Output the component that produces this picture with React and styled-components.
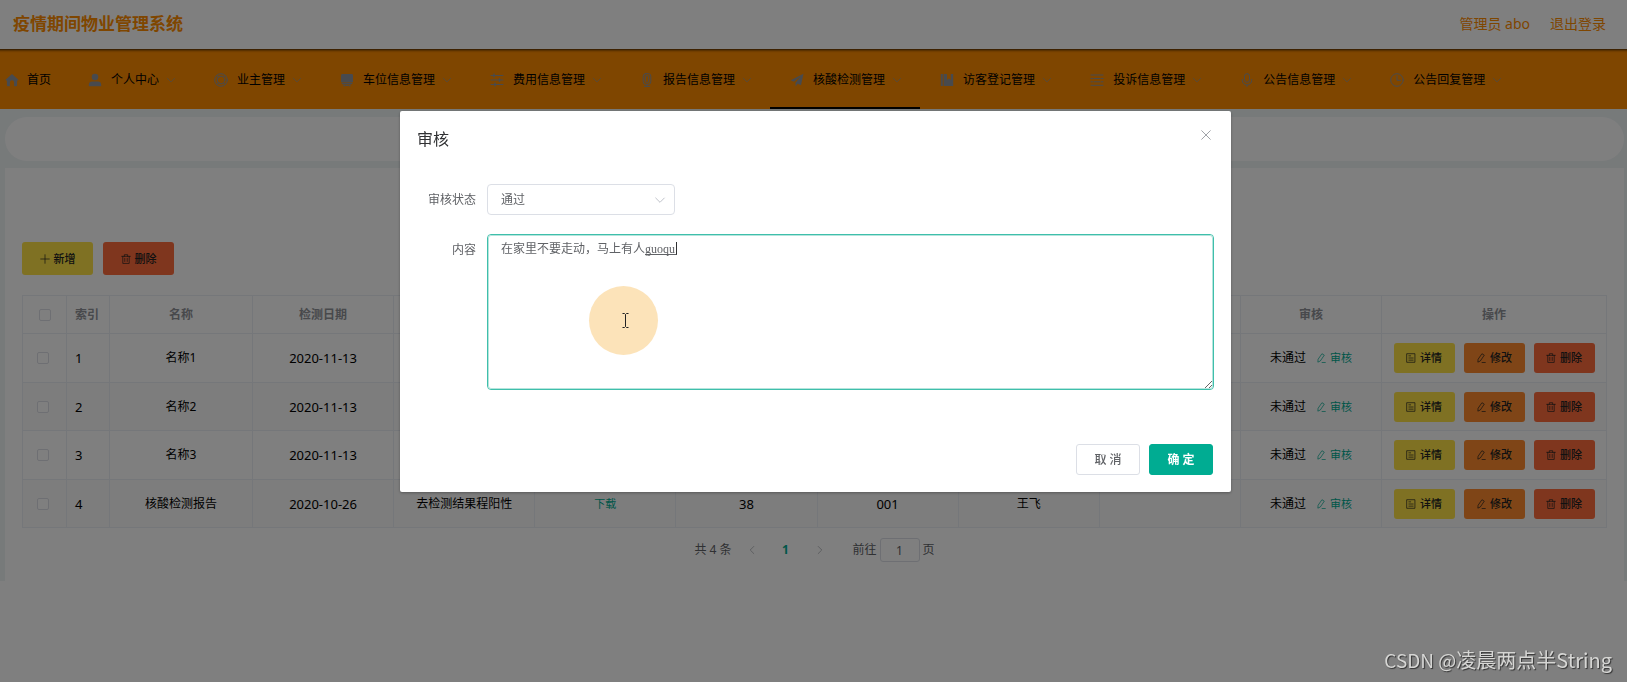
import React, { useState } from 'react';
import styled, { createGlobalStyle, css } from 'styled-components';

const GlobalStyle = createGlobalStyle`
  *, *::before, *::after { box-sizing: border-box; }
  body {
    margin: 0;
    background: #fff;
    color: #000;
    font: 12px/20px "Noto Sans", "Noto Sans CJK SC", sans-serif;
  }
  button, input, select, textarea { font: inherit; color: inherit; margin: 0; }
`;

/* ---------- icons ---------- */

const Svg = styled.svg`
  display: block;
  flex: none;
  width: ${(p) => p.$size || 14}px;
  height: ${(p) => p.$size || 14}px;
  fill: none;
  stroke: currentColor;
  stroke-width: ${(p) => p.$weight || 1};
  stroke-linecap: round;
  stroke-linejoin: round;
`;

const shapes = {
  home: <path fill="currentColor" stroke="none" d="M7 1 .8 6.6c-.3.3-.2.8.3.8h.8v5c0 .5.3.8.8.8h2.2V9.4a2.1 2.1 0 0 1 4.2 0v3.8h2.2c.5 0 .8-.3.8-.8v-5h.8c.5 0 .6-.5.3-.8z" />,
  user: (
    <g fill="currentColor" stroke="none">
      <circle cx="7" cy="4" r="3.3" />
      <path d="M.8 13.2v-1.4C.8 9.7 2.2 8.500 4 8.500h6c1.800 0 3.200 1.200 3.200 3.300v1.400z" />
    </g>
  ),
  help: (
    <g>
      <circle cx="7" cy="7" r="6.300" />
      <circle cx="7" cy="7" r="3.800" />
      <path d="M3 2.500 4.500 4.200M11 2.500 9.500 4.200M3 11.500l1.500-1.700M11 11.500 9.500 9.800" />
    </g>
  ),
  train: (
    <g fill="currentColor" stroke="none">
      <path d="M2.500 1h9c1 0 1.500.6 1.500 1.500V9H1V2.500C1 1.600 1.500 1 2.500 1z" />
      <path d="M1.300 9.600h11.400c-.2 1.200-1 1.900-2 1.900H3.300c-1 0-1.800-.7-2-1.900z" />
      <path d="M3.500 12h2v1.200h-2zM8.500 12h2v1.200h-2zM6 12h2v1H6z" />
    </g>
  ),
  sliders: (
    <g>
      <path d="M1 2.500h12M1 7h12M1 11.500h12" />
      <path d="M4 1.300v2.400M9.500 5.800v2.400M5 10.300v2.400" strokeWidth="1.600" />
    </g>
  ),
  phone: (
    <g>
      <rect x="3.200" y=".7" width="7.600" height="10.600" rx="2.500" />
      <rect x="5.300" y="2.700" width="3.400" height="6.600" rx="1" />
      <path d="M7 11.300v2M4.500 13.400h5" />
    </g>
  ),
  send: <path fill="currentColor" stroke="none" d="M13.500.8.6 7.200l3.300 1.600 7-5.600-5.400 6.500v3.700l2.200-2.700 3.300 1.600z" />,
  book: (
    <g fill="currentColor" stroke="none">
      <path d="M.8 1h2v12h-2z" />
      <path d="M3.600 1H7v6l1.900-1.500L10.800 7V1h2.400v12H3.600z" />
    </g>
  ),
  list: (
    <g>
      <path d="M1 2h12M1 12.300h12M1 5.500h1.500M11.500 5.500H13M1 8.800h1.500M11.500 8.800H13" />
      <path d="M4 5.500h6M4 8.800h6" />
    </g>
  ),
  mic: (
    <g>
      <rect x="4.500" y=".7" width="5" height="8.600" rx="2.500" />
      <path d="M2.300 6.500v.8a4.700 4.700 0 0 0 9.400 0v-.8M7 12v1.500" />
    </g>
  ),
  clock: (
    <g>
      <circle cx="7" cy="7" r="6.300" />
      <path d="M7 3v4.300h3.500" />
    </g>
  ),
  down: <path d="m2 4.700 5 5 5-5" />,
  left: <path d="m9.500 2-5 5 5 5" />,
  right: <path d="m4.500 2 5 5-5 5" />,
  close: <path d="m2 2 10 10M12 2 2 12" />,
  plus: <path d="M7 1v12M1 7h12" />,
  trash: <path d="M1 3.300h12M4.700 3.300V1h4.600v2.300M2.500 3.300v9.900h9v-9.900M5.300 6v4.500M8.700 6v4.500" />,
  doc: <path d="M1.500 1h11v12h-11zM4 4h2.500M4 7h6M4 10h6" />,
  edit: <path d="M8.800 1.300 11.600 3 6 11.200l-3.400 1.600.3-3.500zM8.500 13.300H13" />,
};

const Icon = ({ name, size, weight }) => (
  <Svg viewBox="0 0 14 14" $size={size} $weight={weight} aria-hidden="true">
    {shapes[name]}
  </Svg>
);

/* ---------- header ---------- */

const Header = styled.header`
  display: flex;
  align-items: center;
  justify-content: space-between;
  height: 49px;
  padding: 0 21px 2px 13px;
  color: #ff8c00;
`;

const SystemTitle = styled.h1`
  margin: 0;
  font-size: 17px;
  line-height: 24px;
  font-weight: 700;
`;

const Account = styled.div`
  display: flex;
  gap: 20px;
  font-size: 14px;
`;

const LogoutLink = styled.a`
  color: inherit;
  text-decoration: none;
`;

const Nav = styled.nav`
  display: flex;
  height: 60px;
  background: #ff8c00;
  box-shadow: inset 0 4px 3px -3px rgba(0, 0, 0, 0.8);
`;

const NavItem = styled.a`
  display: flex;
  flex: none;
  align-items: center;
  padding: 4px ${(p) => (p.$home ? 17 : 18)}px 0 ${(p) => (p.$home ? 2 : 17)}px;
  border-bottom: 2px solid ${(p) => (p.$active ? '#000' : 'transparent')};
  color: #000;
  text-decoration: none;
`;

const NavIcon = styled.span`
  display: flex;
  justify-content: center;
  width: 20px;
  margin-right: ${(p) => (p.$home ? 5 : 6)}px;
  color: #90959c;
`;

const NavArrow = styled.span`
  margin-left: 7px;
  color: #90959c;
`;

/* ---------- page ---------- */

const Main = styled.main`
  display: flex;
  flex-direction: column;
  gap: 7px;
  padding: 8px 3px 0 5px;
  background: #eff4f5;
`;

const Crumbs = styled.div`
  height: 44px;
  border-radius: 22px;
  background: #fff;
`;

const Panel = styled.section`
  padding: 74px 17px 18px 17px;
  background: #fff;
`;

const Toolbar = styled.div`
  display: flex;
  gap: 10px;
  margin-bottom: 20px;
`;

const tones = { yellow: '#ffe346', orange: '#ff8b2e', red: '#ff6c3c' };

const ActionButton = styled.button`
  display: inline-flex;
  align-items: center;
  justify-content: center;
  gap: 4px;
  width: ${(p) => (p.$large ? 71 : 61)}px;
  height: ${(p) => (p.$large ? 33 : 30)}px;
  padding: 0;
  border: 0;
  border-radius: 3px;
  background: ${(p) => tones[p.$tone]};
  color: #222;
  font-size: 11px;
  font-weight: 500;
`;

const Table = styled.table`
  width: 100%;
  table-layout: fixed;
  border-collapse: collapse;
`;

const Col = styled.col`
  width: ${(p) => (p.$width ? `${p.$width}px` : 'auto')};
`;

const cell = css`
  padding: 0 8px;
  border: 1px solid #ebeef5;
  text-align: ${(p) => (p.$left ? 'left' : 'center')};
`;

const HeadCell = styled.th`
  ${cell}
  height: 38px;
  color: #909399;
  font-weight: 700;
`;

const Row = styled.tr`
  height: 49px;
  &:nth-child(even) {
    height: 48px;
    background: #fafafa;
  }
`;

const Cell = styled.td`
  ${cell}
  font-size: ${(p) => (p.$numeric ? 13 : 12)}px;
`;

const TickCell = styled(Cell)`
  padding-right: 11px;
`;

const Check = styled.input`
  appearance: none;
  display: block;
  width: 12px;
  height: 12px;
  margin: 0 auto;
  border: 1px solid #dcdfe6;
  border-radius: 2px;
  background: #fff;
`;

const Inline = styled.div`
  display: flex;
  align-items: center;
  justify-content: center;
  gap: ${(p) => p.$gap}px;
`;

const TextButton = styled.button`
  display: inline-flex;
  align-items: center;
  gap: 4px;
  padding: 0;
  border: 0;
  background: none;
  color: #00ac92;
  font-size: 11px;
`;

const Pager = styled.div`
  display: flex;
  align-items: center;
  justify-content: center;
  height: 26px;
  margin-top: 9px;
  color: #606266;
`;

const Total = styled.span`
  margin-right: 3px;
`;

const PagerButton = styled.button`
  display: flex;
  align-items: center;
  justify-content: center;
  width: 34px;
  height: 26px;
  padding: 0;
  border: 0;
  background: none;
  color: ${(p) => (p.$current ? '#00ac92' : '#a0a3a9')};
  font-weight: 700;
`;

const Jump = styled.label`
  display: flex;
  align-items: center;
  gap: 3px;
  margin-left: 16px;
`;

const JumpInput = styled.input`
  width: 40px;
  height: 24px;
  padding: 0;
  border: 1px solid #dcdfe6;
  border-radius: 3px;
  background: #fff;
  text-align: center;
`;

/* ---------- dialog ---------- */

const Overlay = styled.div`
  position: fixed;
  inset: 0;
  display: flex;
  align-items: flex-start;
  justify-content: center;
  padding: 111px 0 0 4px;
  background: rgba(0, 0, 0, 0.5);
`;

const Dialog = styled.section`
  width: 51.2%;
  border-radius: 2px;
  background: #fff;
  box-shadow: 0 1px 3px rgba(0, 0, 0, 0.3);
  color: #606266;
`;

const DialogHead = styled.header`
  display: flex;
  align-items: flex-start;
  justify-content: space-between;
  padding: 17px 18px 9px 17px;
`;

const DialogTitle = styled.h2`
  margin: 0;
  color: #303133;
  font-size: 16px;
  line-height: 22px;
  font-weight: 400;
`;

const CloseButton = styled.button`
  display: flex;
  padding: 1px;
  border: 0;
  background: none;
  color: #909399;
`;

const Form = styled.form`
  display: grid;
  grid-template-columns: 59px minmax(0, 1fr);
  column-gap: 11px;
  row-gap: 19px;
  padding: 25px 17px;
`;

const FieldLabel = styled.label`
  line-height: 31px;
  text-align: right;
`;

const SelectBox = styled.div`
  position: relative;
  width: 188px;
`;

const Select = styled.select`
  appearance: none;
  display: block;
  width: 100%;
  height: 31px;
  padding: 0 28px 0 13px;
  border: 1px solid #dcdfe6;
  border-radius: 4px;
  background: #fff;
`;

const SelectArrow = styled.span`
  position: absolute;
  top: 10px;
  right: 9px;
  color: #b4b8c0;
  pointer-events: none;
`;

const TextBox = styled.div`
  position: relative;
`;

const TextArea = styled.textarea`
  display: block;
  width: 100%;
  height: 156px;
  padding: 4px 13px;
  border: 1px solid #3fbfab;
  border-radius: 4px;
  outline: 1px solid #b5e5dd;
  outline-offset: -2px;
  background: #fff;
  font-family: "Liberation Serif", "Noto Sans CJK SC", serif;
  resize: vertical;
`;

const Composition = styled.span`
  position: absolute;
  top: 8px;
  left: 158px;
  width: 32px;
  height: 13px;
  border-right: 1px solid #303133;
  border-bottom: 1px solid #606266;
  pointer-events: none;
`;

const Pointer = styled.span`
  position: absolute;
  top: 52px;
  left: 102px;
  display: flex;
  align-items: center;
  justify-content: center;
  width: 69px;
  height: 69px;
  padding-left: 4px;
  border-radius: 50%;
  background: #fce3b9;
  pointer-events: none;
`;

const Beam = styled.svg`
  width: 7px;
  height: 15px;
  fill: none;
  stroke: #222;
`;

const DialogFoot = styled.footer`
  display: flex;
  justify-content: flex-end;
  gap: 9px;
  padding: 29px 18px 17px;
`;

const DialogButton = styled.button`
  width: 64px;
  height: 31px;
  padding: 0;
  border: 1px solid ${(p) => (p.$primary ? '#00ac92' : '#dcdfe6')};
  border-radius: 3px;
  background: ${(p) => (p.$primary ? '#00ac92' : '#fff')};
  color: ${(p) => (p.$primary ? '#fff' : '#606266')};
  font-weight: ${(p) => (p.$primary ? 700 : 500)};
`;

const Watermark = styled.div`
  position: fixed;
  right: 15px;
  bottom: 7px;
  color: #d6d6d4;
  font: 20px/30px "Noto Sans CJK SC", sans-serif;
  text-shadow: 1px 1px 1px rgba(0, 0, 0, 0.6);
`;

const Site = styled.span`
  font-size: 19px;
`;

/* ---------- data ---------- */

const menu = [
  ['user', '个人中心'],
  ['help', '业主管理'],
  ['train', '车位信息管理'],
  ['sliders', '费用信息管理'],
  ['phone', '报告信息管理'],
  ['send', '核酸检测管理'],
  ['book', '访客登记管理'],
  ['list', '投诉信息管理'],
  ['mic', '公告信息管理'],
  ['clock', '公告回复管理'],
];

const records = [
  { name: '名称1', date: '2020-11-13' },
  { name: '名称2', date: '2020-11-13' },
  { name: '名称3', date: '2020-11-13' },
  { name: '核酸检测报告', date: '2020-10-26', result: '去检测结果程阳性', file: '下载', temperature: '38', account: '001', owner: '王飞' },
];

const columnWidths = [44, 43, 143, 0, 0, 0, 0, 0, 0, 0, 0, 225];

export default function App() {
  const [status, setStatus] = useState('通过');
  const [content, setContent] = useState('在家里不要走动，马上有人guoqu');

  return (
    <>
      <GlobalStyle />
      <Header>
        <SystemTitle>疫情期间物业管理系统</SystemTitle>
        <Account>
          <span>管理员 abo</span>
          <LogoutLink href="#logout">退出登录</LogoutLink>
        </Account>
      </Header>
      <Nav>
        <NavItem href="#home" $home>
          <NavIcon $home><Icon name="home" /></NavIcon>
          首页
        </NavItem>
        {menu.map(([icon, text]) => (
          <NavItem key={icon} href={`#${icon}`} $active={icon === 'send'}>
            <NavIcon><Icon name={icon} /></NavIcon>
            {text}
            <NavArrow><Icon name="down" size={10} /></NavArrow>
          </NavItem>
        ))}
      </Nav>

      <Main>
        <Crumbs />
        <Panel>
          <Toolbar>
            <ActionButton type="button" $large $tone="yellow"><Icon name="plus" size={10} />新增</ActionButton>
            <ActionButton type="button" $large $tone="red"><Icon name="trash" size={10} />删除</ActionButton>
          </Toolbar>
          <Table>
            <colgroup>
              {columnWidths.map((width, i) => <Col key={i} $width={width} />)}
            </colgroup>
            <thead>
              <tr>
                <HeadCell><Check type="checkbox" aria-label="全选" /></HeadCell>
                <HeadCell $left>索引</HeadCell>
                <HeadCell>名称</HeadCell>
                <HeadCell>检测日期</HeadCell>
                <HeadCell />
                <HeadCell />
                <HeadCell />
                <HeadCell />
                <HeadCell />
                <HeadCell />
                <HeadCell>审核</HeadCell>
                <HeadCell>操作</HeadCell>
              </tr>
            </thead>
            <tbody>
              {records.map((r, i) => (
                <Row key={r.name}>
                  <TickCell><Check type="checkbox" aria-label={r.name} /></TickCell>
                  <Cell $left $numeric>{i + 1}</Cell>
                  <Cell>{r.name}</Cell>
                  <Cell $numeric>{r.date}</Cell>
                  <Cell>{r.result}</Cell>
                  <Cell>{r.file && <TextButton type="button">{r.file}</TextButton>}</Cell>
                  <Cell $numeric>{r.temperature}</Cell>
                  <Cell $numeric>{r.account}</Cell>
                  <Cell>{r.owner}</Cell>
                  <Cell />
                  <Cell>
                    <Inline $gap={10}>
                      未通过
                      <TextButton type="button"><Icon name="edit" size={10} />审核</TextButton>
                    </Inline>
                  </Cell>
                  <Cell>
                    <Inline $gap={9}>
                      <ActionButton type="button" $tone="yellow"><Icon name="doc" size={10} />详情</ActionButton>
                      <ActionButton type="button" $tone="orange"><Icon name="edit" size={10} />修改</ActionButton>
                      <ActionButton type="button" $tone="red"><Icon name="trash" size={10} />删除</ActionButton>
                    </Inline>
                  </Cell>
                </Row>
              ))}
            </tbody>
          </Table>
          <Pager>
            <Total>共 4 条</Total>
            <PagerButton type="button" aria-label="上一页"><Icon name="left" size={10} /></PagerButton>
            <PagerButton type="button" $current>1</PagerButton>
            <PagerButton type="button" aria-label="下一页"><Icon name="right" size={10} /></PagerButton>
            <Jump>
              前往
              <JumpInput type="text" defaultValue="1" />
              页
            </Jump>
          </Pager>
        </Panel>
      </Main>

      <Overlay>
        <Dialog role="dialog" aria-labelledby="audit-title">
          <DialogHead>
            <DialogTitle id="audit-title">审核</DialogTitle>
            <CloseButton type="button" aria-label="关闭"><Icon name="close" size={12} /></CloseButton>
          </DialogHead>
          <Form>
            <FieldLabel htmlFor="status">审核状态</FieldLabel>
            <SelectBox>
              <Select id="status" value={status} onChange={(e) => setStatus(e.target.value)}>
                <option>通过</option>
              </Select>
              <SelectArrow><Icon name="down" size={12} /></SelectArrow>
            </SelectBox>
            <FieldLabel htmlFor="content">内容</FieldLabel>
            <TextBox>
              <TextArea id="content" value={content} spellCheck={false} onChange={(e) => setContent(e.target.value)} />
              <Composition />
              <Pointer>
                <Beam viewBox="0 0 7 15" aria-hidden="true">
                  <path d="M.5.5h2l1 1 1-1h2M3.500 1.500v12M.5 14.500h2l1-1 1 1h2" />
                </Beam>
              </Pointer>
            </TextBox>
          </Form>
          <DialogFoot>
            <DialogButton type="button">取 消</DialogButton>
            <DialogButton type="button" $primary>确 定</DialogButton>
          </DialogFoot>
        </Dialog>
      </Overlay>
      <Watermark><Site>CSDN @</Site>凌晨两点半String</Watermark>
    </>
  );
}
